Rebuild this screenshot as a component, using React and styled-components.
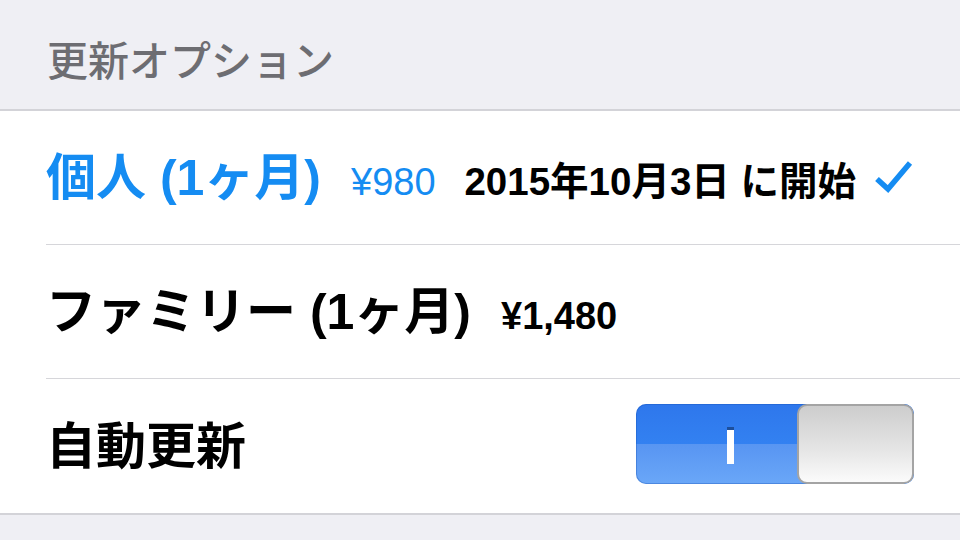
import React from "react";
import styled, { createGlobalStyle } from "styled-components";

const GlobalStyle = createGlobalStyle`
  html, body {
    margin: 0;
    padding: 0;
    background: #efeff4;
  }
  body {
    font-family: "Liberation Sans", "Noto Sans CJK JP", sans-serif;
    -webkit-font-smoothing: antialiased;
  }
`;

const Page = styled.div`
  width: 960px;
  height: 540px;
  background: #efeff4;
  overflow: hidden;
`;

const SectionHeader = styled.div`
  height: 111px;
  box-sizing: border-box;
  padding: 34px 0 0 47px;
  font-size: 41px;
  line-height: 48px;
  font-weight: 500;
  color: #6d6d72;
  font-family: "Noto Sans CJK JP", sans-serif;
  border-bottom: 2px solid #d3d3d8;
`;

const Group = styled.div`
  background: #ffffff;
  border-bottom: 2px solid #d3d3d8;
  padding-left: 46px;
`;

const Row = styled.div`
  height: 134px;
  display: flex;
  align-items: center;
  padding: 0 46px 9px 0;
  box-sizing: border-box;
  border-bottom: ${(p) => (p.$last ? "none" : "1.5px solid #d6d6da")};
`;

/* title, price and detail share one baseline */
const Line = styled.div`
  flex: 1;
  display: flex;
  align-items: baseline;
  min-width: 0;
`;

const Title = styled.span`
  font-size: 50px;
  font-weight: 700;
  color: ${(p) => (p.$active ? "#158cf2" : "#000000")};
  white-space: nowrap;
`;

const Price = styled.span`
  margin-left: ${(p) => p.$gap}px;
  font-size: 38px;
  font-weight: ${(p) => (p.$active ? 400 : 700)};
  color: ${(p) => (p.$active ? "#158cf2" : "#000000")};
  white-space: nowrap;
`;

const Detail = styled.span`
  margin-left: auto;
  font-size: 38.5px;
  font-weight: 700;
  color: #000000;
  white-space: nowrap;
`;

const Check = styled.svg`
  flex: none;
  margin: 8px 0 0 18px;
  width: 40px;
  height: 34px;
`;

const Toggle = styled.div`
  margin: 5px 0 0 auto;
  width: 278px;
  height: 80px;
  border-radius: 10px;
  overflow: hidden;
  display: flex;
  background: linear-gradient(
    to bottom,
    #2e77ec 0%,
    #3381f1 50%,
    #5895f2 50%,
    #6aa7f8 100%
  );
  box-shadow: inset 0 0 0 1px rgba(20, 80, 180, 0.35);
`;

const OnSide = styled.div`
  flex: 1;
  display: flex;
  align-items: center;
  justify-content: flex-end;
  padding-right: 63px;
`;

const OnBar = styled.div`
  width: 7px;
  height: 37px;
  background: #ffffff;
  border-top: 3px solid #1d4f9c;
  box-sizing: border-box;
  margin-top: 2px;
`;

const Knob = styled.div`
  width: 117px;
  height: 100%;
  box-sizing: border-box;
  border: 2px solid #a4a4a4;
  border-radius: 10px;
  background: linear-gradient(to bottom, #cdcdcd 0%, #e4e4e4 55%, #fbfbfb 100%);
`;

export default function App() {
  return (
    <Page>
      <GlobalStyle />
      <SectionHeader>更新オプション</SectionHeader>
      <Group>
        <Row>
          <Line>
            <Title $active>個人 (1ヶ月)</Title>
            <Price $active $gap={30}>¥980</Price>
            <Detail>2015年10月3日 に開始</Detail>
          </Line>
          <Check viewBox="0 0 40 34">
            <polyline
              points="3,19 14,29 36,3"
              fill="none"
              stroke="#158cf2"
              strokeWidth="5.5"
              strokeLinecap="butt"
              strokeLinejoin="miter"
            />
          </Check>
        </Row>
        <Row>
          <Line>
            <Title>ファミリー (1ヶ月)</Title>
            <Price $gap={30}>¥1,480</Price>
          </Line>
        </Row>
        <Row $last>
          <Title>自動更新</Title>
          <Toggle>
            <OnSide>
              <OnBar />
            </OnSide>
            <Knob />
          </Toggle>
        </Row>
      </Group>
    </Page>
  );
}
